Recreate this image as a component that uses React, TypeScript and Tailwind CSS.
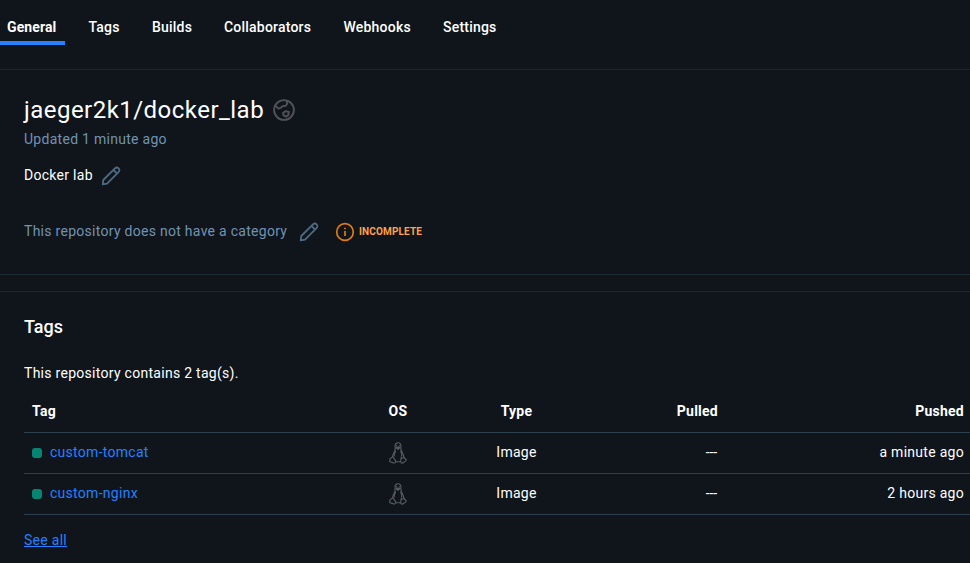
const tabs = [
  { label: 'Tags', box: 'ml-[23.5px] w-[31px]' },
  { label: 'Builds', box: 'ml-[32.5px] w-[40px]' },
  { label: 'Collaborators', box: 'ml-[32px] w-[88px]' },
  { label: 'Webhooks', box: 'ml-[31.5px] w-[68px]' },
  { label: 'Settings', box: 'ml-[31.5px] w-[54px]' },
];

const rows = [
  { name: 'custom-tomcat', pushed: 'a minute ago' },
  { name: 'custom-nginx', pushed: '2 hours ago' },
];

const columns = 'grid grid-cols-[337px_74px_163px_120px_246px]';

function Pencil() {
  return (
    <svg width="20" height="20" viewBox="0 0 20 20" fill="none" stroke="#4d6b82" strokeWidth="1.8" strokeLinejoin="round" className="mt-[2px] shrink-0">
      <path d="M1.7 18.3 L2.3 14 L13.7 2.6 C15.1 1.2 16.4 1.1 17.6 2.3 C18.8 3.5 18.7 4.9 17.3 6.3 L6 17.6 Z" />
      <path d="M12.5 4 L15.9 7.4" />
    </svg>
  );
}

function Globe() {
  return (
    <svg width="22" height="22" viewBox="0 0 22 22" fill="none" stroke="#505255" strokeWidth="1.9" strokeLinejoin="round">
      <circle cx="11" cy="11" r="9.9" />
      <path d="M2.6 6.8 L5.4 9.6 L8 8.6 L9.2 7.4 L12.8 6.8 L14.2 4.8 L13.6 1.6" />
      <path d="M10 14 L12.4 12.2 L15.8 13 L15.4 16 L13.1 17.6 L10.6 16.4 Z" />
    </svg>
  );
}

function Penguin() {
  return (
    <svg width="18" height="22" viewBox="0 0 18 22" fill="none" stroke="#595c60" strokeWidth="1.15" strokeLinejoin="round">
      <path d="M3.6 15.1 C3.5 11.8 6 10.2 6.1 7.4 V3.8 C6.1 1.8 7.2 .7 9 .7 C10.8 .7 11.9 1.9 11.9 3.9 V6.8 C12 9.8 15 11.5 14.6 15.2" />
      <path d="M3.5 14.8 C4.7 15.4 5.7 17.5 6.8 19 C6.9 20.6 5.8 21.2 4.6 20.9 L1.1 19.8 C.2 19.4 1.1 18.6 .9 17 C.8 16.2 2.6 16.2 3.5 14.8 Z" />
      <path d="M12.2 15.2 C13.2 16.7 14.7 16.4 15.1 15.1 C15.5 16.9 17.4 17.3 17.4 18 C17.2 19 15 20.2 13.8 21 C12.5 21.5 11.6 20.6 11.7 19.3 Z" />
      <path d="M6.7 19.7 H11.6 M5.2 14.5 C5 12.4 6 10 6.7 8.8 M11.5 8.8 C12.5 10.5 13 12.5 12.6 14.5" />
      <path d="M7.3 5.8 L9 4.9 L10.9 5.8 L8.9 7.3 Z" fill="#595c60" />
      <path d="M7.5 3.2 V4.4 M10.4 3.2 V4.4" />
    </svg>
  );
}

export default function App() {
  return (
    <div className="flex h-[563px] w-[970px] flex-col overflow-hidden bg-[#10151b] font-[Roboto,sans-serif] text-[14px] leading-[20px] text-white">
      <nav className="flex h-[70px] shrink-0 border-b border-[#1e262d] font-medium tracking-[0.21px] whitespace-nowrap">
        <div className="flex h-[45px] w-[65px] items-end border-b-4 border-[#2680ff] pb-1 pl-[7px] font-bold tracking-[0.12px]">
          <span>General</span>
        </div>
        {tabs.map((tab) => (
          <span key={tab.label} className={`pt-[17px] ${tab.box}`}>{tab.label}</span>
        ))}
      </nav>

      <section className="flex h-[205px] shrink-0 flex-col border-b border-[#1e2a31] pl-6 whitespace-nowrap">
        <div className="mt-[24px] flex h-8 items-center">
          <h1 className="w-[249px] text-[24px] leading-8 tracking-[0.47px]">jaeger2k1/docker_lab</h1>
          <Globe />
        </div>
        <p className="mt-[3px] tracking-[0.28px] text-[#7093b2]">Updated 1 minute ago</p>
        <div className="mt-4 flex h-5 items-center">
          <span className="w-[77px] tracking-[0.28px]">Docker lab</span>
          <Pencil />
        </div>
        <div className="mt-9 flex h-5 items-center">
          <span className="w-[275px] tracking-[0.28px] text-[#7093b2]">This repository does not have a category</span>
          <Pencil />
          <svg width="20" height="20" viewBox="0 0 20 20" fill="none" stroke="#de7a16" strokeWidth="1.7" className="mt-[2px] ml-4">
            <circle cx="10" cy="10" r="8.3" />
            <path d="M10 9 V14 M10 5.8 V7.3" />
          </svg>
          <span className="mt-[2px] ml-1 text-[10px] font-bold tracking-[0.15px] text-[#ffa24a]">INCOMPLETE</span>
        </div>
      </section>

      <section className="mt-4 flex grow flex-col border-t border-[#1e2a31] pl-6">
        <h2 className="mt-[23px] text-[18px] leading-6 font-medium">Tags</h2>
        <p className="mt-6 tracking-[0.28px]">This repository contains 2 tag(s).</p>
        <div className="mt-[9px]">
          <div className={`${columns} h-[41px] items-center border-b border-[#2d404d] pb-[2px] font-bold tracking-[0.25px]`}>
            <span className="pl-2">Tag</span>
            <span className="text-center">OS</span>
            <span className="text-center">Type</span>
            <span className="text-right">Pulled</span>
            <span className="text-right">Pushed</span>
          </div>
          {rows.map((row) => (
            <div key={row.name} className={`${columns} h-[41px] items-center border-b border-[#2d404d] pb-[2px] tracking-[0.28px]`}>
              <span className="flex items-center gap-2 pl-2">
                <i className="mt-px h-[10px] w-[10px] rounded-[3px] bg-[#078573]" />
                <span className="text-[#2680ff]">{row.name}</span>
              </span>
              <span className="flex justify-center pt-px"><Penguin /></span>
              <span className="text-center">Image</span>
              <span className="pr-px text-right tracking-[-0.1px]">---</span>
              <span className="text-right">{row.pushed}</span>
            </div>
          ))}
        </div>
        <a className="mt-[15px] self-start tracking-[0.28px] text-[#2680ff] underline">See all</a>
      </section>
    </div>
  );
}
